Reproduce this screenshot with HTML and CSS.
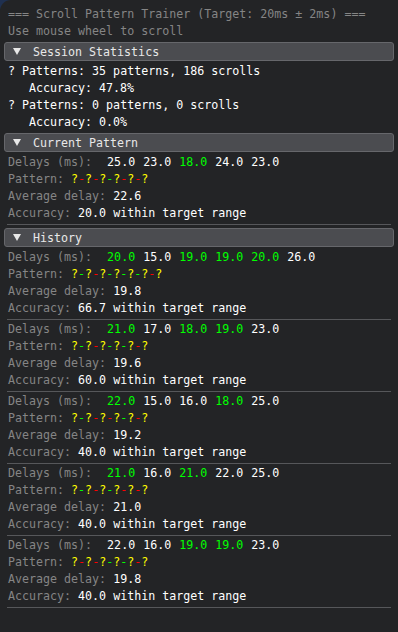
FILE: index.html
```html
<!DOCTYPE html>
<html lang="en">

<head>
  <meta charset="UTF-8">
  <title>Scroll Pattern Trainer</title>
  <link rel="stylesheet" href="styles.css">
</head>

<body>
  <div class="window">
    <div class="line dim">=== Scroll Pattern Trainer (Target: 20ms ± 2ms) ===</div>
    <div class="line dim">Use mouse wheel to scroll</div>

    <div class="header"><span class="arrow"></span>Session Statistics</div>
    <div class="line">? Patterns: 35 patterns, 186 scrolls</div>
    <div class="line indent">Accuracy: 47.8%</div>
    <div class="line">? Patterns: 0 patterns, 0 scrolls</div>
    <div class="line indent">Accuracy: 0.0%</div>

    <div class="header"><span class="arrow"></span>Current Pattern</div>
    <div class="line delays"><span class="dim">Delays (ms): </span><span>25.0</span><span>23.0</span><span class="ok">18.0</span><span>24.0</span><span>23.0</span></div>
    <div class="line"><span class="dim">Pattern: </span><span class="q">?</span><span class="bad">-</span><span class="q">?</span><span class="bad">-</span><span class="q">?</span><span class="ok">-</span><span class="q">?</span><span class="bad">-</span><span class="q">?</span><span class="bad">-</span><span class="q">?</span></div>
    <div class="line"><span class="dim">Average delay: </span>22.6</div>
    <div class="line"><span class="dim">Accuracy: </span>20.0 within target range</div>
    <div class="separator"></div>

    <div class="header"><span class="arrow"></span>History</div>

    <div class="line delays"><span class="dim">Delays (ms): </span><span class="ok">20.0</span><span>15.0</span><span class="ok">19.0</span><span class="ok">19.0</span><span class="ok">20.0</span><span>26.0</span></div>
    <div class="line"><span class="dim">Pattern: </span><span class="q">?</span><span class="ok">-</span><span class="q">?</span><span class="bad">-</span><span class="q">?</span><span class="ok">-</span><span class="q">?</span><span class="ok">-</span><span class="q">?</span><span class="ok">-</span><span class="q">?</span><span class="bad">-</span><span class="q">?</span></div>
    <div class="line"><span class="dim">Average delay: </span>19.8</div>
    <div class="line"><span class="dim">Accuracy: </span>66.7 within target range</div>
    <div class="separator"></div>

    <div class="line delays"><span class="dim">Delays (ms): </span><span class="ok">21.0</span><span>17.0</span><span class="ok">18.0</span><span class="ok">19.0</span><span>23.0</span></div>
    <div class="line"><span class="dim">Pattern: </span><span class="q">?</span><span class="ok">-</span><span class="q">?</span><span class="bad">-</span><span class="q">?</span><span class="ok">-</span><span class="q">?</span><span class="ok">-</span><span class="q">?</span><span class="bad">-</span><span class="q">?</span></div>
    <div class="line"><span class="dim">Average delay: </span>19.6</div>
    <div class="line"><span class="dim">Accuracy: </span>60.0 within target range</div>
    <div class="separator"></div>

    <div class="line delays"><span class="dim">Delays (ms): </span><span class="ok">22.0</span><span>15.0</span><span>16.0</span><span class="ok">18.0</span><span>25.0</span></div>
    <div class="line"><span class="dim">Pattern: </span><span class="q">?</span><span class="ok">-</span><span class="q">?</span><span class="bad">-</span><span class="q">?</span><span class="bad">-</span><span class="q">?</span><span class="ok">-</span><span class="q">?</span><span class="bad">-</span><span class="q">?</span></div>
    <div class="line"><span class="dim">Average delay: </span>19.2</div>
    <div class="line"><span class="dim">Accuracy: </span>40.0 within target range</div>
    <div class="separator"></div>

    <div class="line delays"><span class="dim">Delays (ms): </span><span class="ok">21.0</span><span>16.0</span><span class="ok">21.0</span><span>22.0</span><span>25.0</span></div>
    <div class="line"><span class="dim">Pattern: </span><span class="q">?</span><span class="ok">-</span><span class="q">?</span><span class="bad">-</span><span class="q">?</span><span class="ok">-</span><span class="q">?</span><span class="bad">-</span><span class="q">?</span><span class="bad">-</span><span class="q">?</span></div>
    <div class="line"><span class="dim">Average delay: </span>21.0</div>
    <div class="line"><span class="dim">Accuracy: </span>40.0 within target range</div>
    <div class="separator"></div>

    <div class="line delays"><span class="dim">Delays (ms): </span><span>22.0</span><span>16.0</span><span class="ok">19.0</span><span class="ok">19.0</span><span>23.0</span></div>
    <div class="line"><span class="dim">Pattern: </span><span class="q">?</span><span class="bad">-</span><span class="q">?</span><span class="bad">-</span><span class="q">?</span><span class="ok">-</span><span class="q">?</span><span class="ok">-</span><span class="q">?</span><span class="bad">-</span><span class="q">?</span></div>
    <div class="line"><span class="dim">Average delay: </span>19.8</div>
    <div class="line"><span class="dim">Accuracy: </span>40.0 within target range</div>
    <div class="separator"></div>
  </div>
</body>

</html>
```

FILE: styles.css
```css
* {
  box-sizing: border-box;
}

html,
body {
  margin: 0;
  height: 100%;
  background: #1f3050;
}

body {
  font-family: "DejaVu Sans Mono", "Liberation Mono", monospace;
  font-size: 11.65px;
  color: #ffffff;
}

.window {
  display: flex;
  flex-direction: column;
  gap: 4px;
  height: 100%;
  padding: 8px;
  background: #232426;
  border-top-left-radius: 11px;
}

.line {
  height: 13px;
  line-height: 13px;
  white-space: pre;
}

.indent {
  padding-left: 21px;
}

.dim {
  color: #858585;
}

.ok {
  color: #00ff00;
}

.bad {
  color: #ff0000;
}

.q {
  color: #ffff00;
}

.delays {
  display: flex;
  gap: 8px;
}

.header {
  display: flex;
  align-items: center;
  height: 19px;
  margin: 0 -4px;
  padding-left: 28px;
  position: relative;
  background: #4b4c50;
  border: 1px solid #66676b;
  border-radius: 3px;
  color: #e8e8e8;
  white-space: pre;
}

.arrow {
  position: absolute;
  left: 8px;
  top: 5px;
  width: 0;
  height: 0;
  border-left: 4px solid transparent;
  border-right: 4px solid transparent;
  border-top: 7px solid #e8e8e8;
}

.separator {
  height: 1px;
  margin: 0 -1px -1px;
  background: #56575a;
}
```
